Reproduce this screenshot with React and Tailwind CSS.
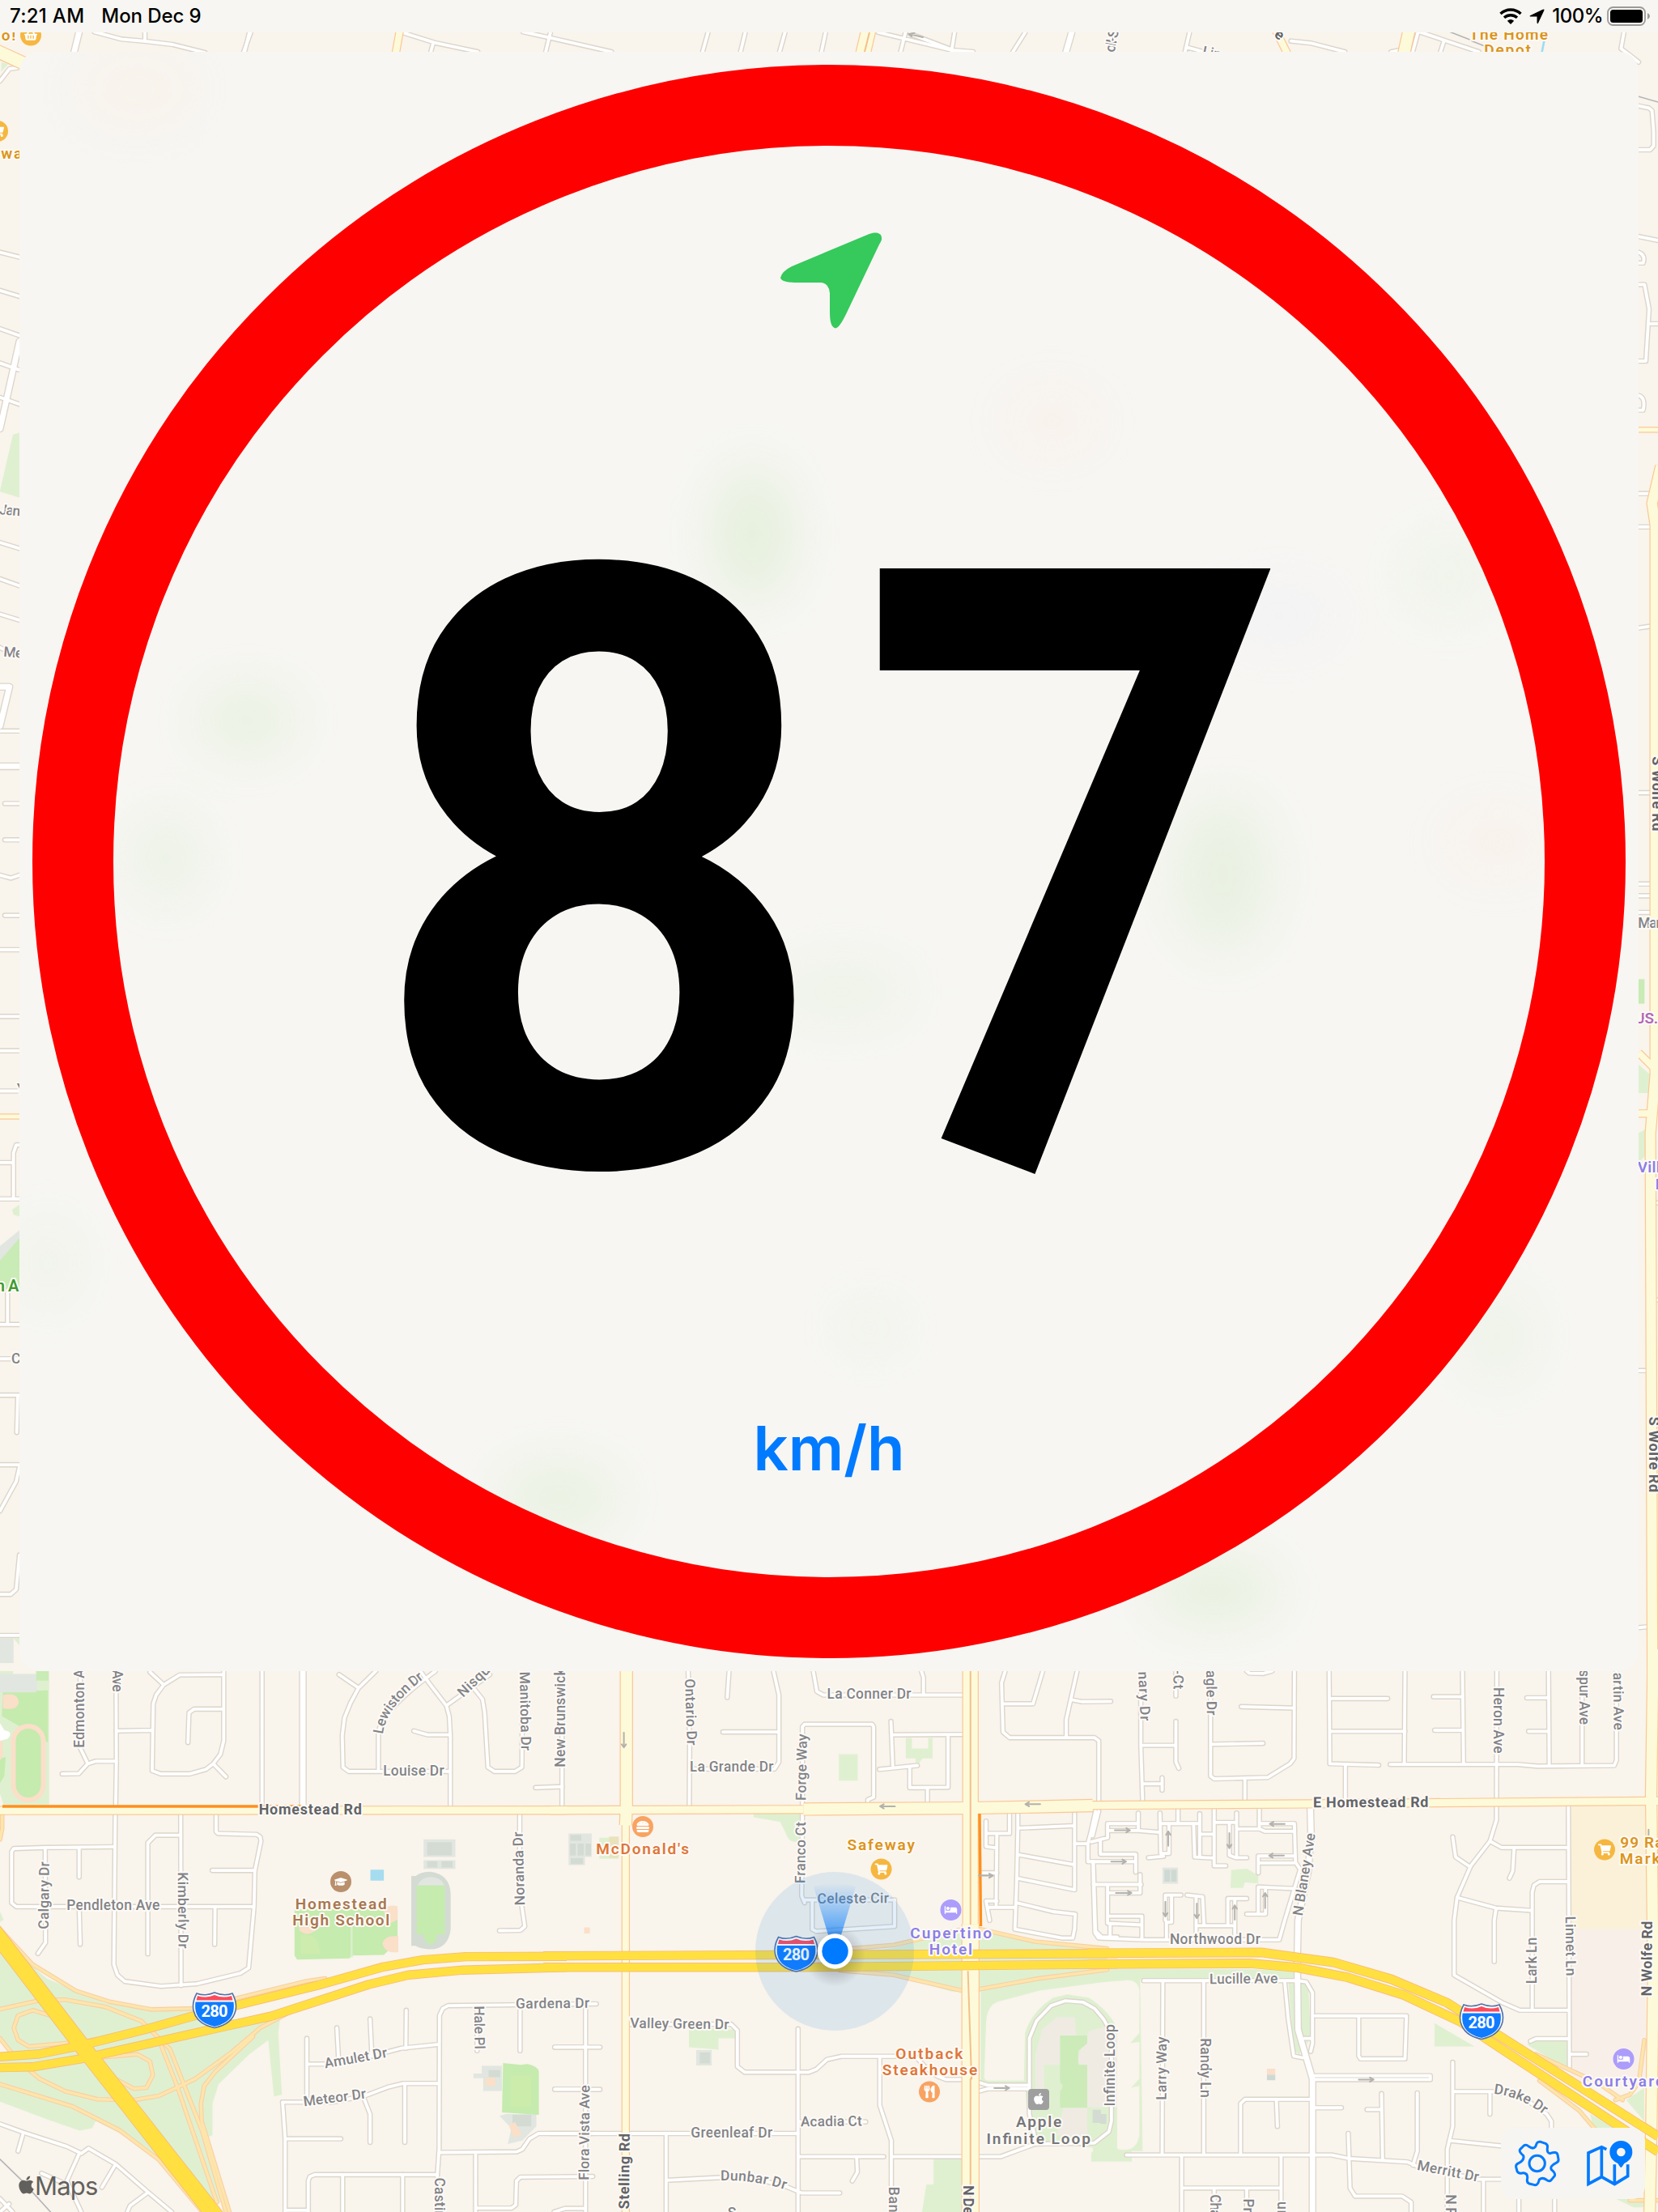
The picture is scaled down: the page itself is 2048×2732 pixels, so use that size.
// FILE: src/App.jsx

import {
  FaApple,
  FaBed,
  FaGraduationCap,
  FaHamburger,
  FaShoppingBasket,
  FaShoppingCart,
  FaUtensils,
} from "react-icons/fa";

// Each map section has its own drawing units
const sections = {
  west: { x: 0, y: 2050, sx: 0.44643, sy: 0.43495 },
  center: { x: 680, y: 2050, sx: 0.44643, sy: 0.43495 },
  east: { x: 1348, y: 2050, sx: 0.44643, sy: 0.43495 },
  left: { x: 0, y: 200, sx: 0.33333, sy: 1.2117 },
  right: { x: 1988, y: 200, sx: 0.33333, sy: 1.2117 },
  topLeft: { x: 0, y: 0, sx: 0.33333, sy: 0.33333 },
  topRight: { x: 1700, y: 0, sx: 0.33333, sy: 0.33333 },
  topA: { x: 300, y: 30, sx: 0.44643, sy: 0.33333 },
  topB: { x: 1000, y: 30, sx: 0.45918, sy: 0.33333 },
};

const place = (s) => {
  const { x, y, sx, sy } = sections[s];
  return `translate(${x} ${y}) scale(${sx} ${sy})`;
};

// [section, fill, path]
const areas = [
  ["west", "#dff0d1", "M0 32H136V412H10L0 380Z"],
  ["west", "#e1e6e0", "M0 40H103V90H0Z"],
  ["west", "#f9f4ec", "M36 32H100V40H36Z"],
  ["west", "#c5ebae", "M8 90L133 87V235L5 160ZM0 280L16 276L12 330L0 350Z"],
  ["west", "#fadfc9", "M8 100Q50 90 52 120Q50 145 8 138ZM0 225L8 235V275L0 285Z"],
  ["west", "#fff", "M0 180L12 200Q40 205 20 225L0 230Z"],
  ["west", "#dff0d1", "M0 780L60 845L130 905L290 975L420 992L530 985L660 1025L775 1018L770 1060L780 1235L758 1240L742 1080L690 1120L605 1205L588 1260V1350L565 1360L610 1540L565 1568L520 1480L400 1380L265 1310L255 1330L220 1337L130 1305L0 1255Z"],
  ["west", "#f9f4ec", "M0 1075L30 1120H0Z"],
  ["west", "#dff0d1", "M0 715L10 738L0 745Z"],
  ["west", "#c5ebae", "M815 708H1100V800L1062 838L970 840L968 848L822 851L815 840Z"],
  ["west", "#cdecae", "M832 780Q885 775 885 835H832Z"],
  ["west", "#d9efcb", "M970 740H976V845H970Z"],
  ["west", "#fadfc9", "M1060 712Q1075 692 1100 700V738L1080 748ZM1058 805Q1065 782 1102 784V830Q1065 835 1058 805ZM828 768Q850 790 878 765V755H828Z"],
  ["west", "#d3dbd3", "M1138 614H1150Q1165 602 1192 602Q1245 610 1247 665V765Q1240 822 1190 822Q1160 820 1150 812H1138Z"],
  ["west", "#e1e6e0", "M1155 641Q1165 617 1192 617Q1220 617 1230 641Z"],
  ["west", "#c5ebae", "M1153 641H1231V780H1210Q1208 808 1190 808Q1174 805 1172 780H1153Z"],
  ["west", "#e1e6e0", "M1172 510H1260V560H1172ZM1172 569H1260V594H1172Z"],
  ["west", "#d3dbd3", "M1182 518H1250V555H1182ZM1182 572H1210V590H1182ZM1222 572H1252V590H1222Z"],
  ["west", "#a5dcf0", "M1025 596H1062V627H1025Z"],
  ["west", "#e1e6e0", "M1333 1153H1389V1224H1337V1188H1310V1175H1333ZM1382 1295L1400 1290H1484V1325L1445 1365L1405 1375L1415 1330Z"],
  ["west", "#d3dbd3", "M1352 1165H1384V1185H1352ZM1418 1292H1470V1325H1418Z"],
  ["west", "#fadfc9", "M1343 1187H1371V1210H1343ZM1408 1322L1425 1312L1444 1348L1422 1358Z"],
  ["west", "#c5ebae", "M1392 1145L1440 1150L1460 1148Q1490 1155 1491 1170V1292L1389 1285Z"],
  ["west", "#cbecaa", "M1412 1180H1470V1270H1412Z"],
  ["center", "#dff0d1", "M562 437H690V515Q660 525 650 490L635 460L562 447Z"],
  ["center", "#dff0d1", "M798 268H850V343H798ZM983 222H1000V252H1045V222H1057V280H1030L1010 305V280H983Z"],
  ["center", "#dff0d1", "M383 1045L512 1050V1075H465V1107L383 1100ZM135 505H188V565H135Z"],
  ["center", "#e9e2bd", "M162 502H189V562H162Z"],
  ["center", "#e1e6e0", "M50 493H114V560H95V583H50ZM403 1108H446V1152H403Z"],
  ["center", "#d3dbd3", "M55 497H85V514H55ZM54 522H70V556H54ZM75 522H92V556H75ZM97 522H112V556H97ZM56 563H90V580H56ZM413 1115H441V1146H413Z"],
  ["center", "#fadfc9", "M93 760H109V777H93Z"],
  ["center", "#dff0d1", "M800 840L950 818L1140 768L1195 765L1340 800L1540 822V880L1200 942H1110L950 895L800 882Z"],
  ["center", "#dff0d1", "M1190 942L1500 880H1568V910L1350 940L1240 970Q1205 980 1205 1040L1200 1185Q1200 1195 1215 1195H1310L1313 1060Q1330 1000 1390 960L1430 950L1490 960Q1550 1000 1568 1050V1400L1505 1425L1500 1385L1325 1370L1313 1205L1190 1200Z"],
  ["center", "#dff0d1", "M1060 1418H1138V1568H1028L1040 1490H1060Z"],
  ["center", "#efebe3", "M1342 1120L1360 1050L1400 1015H1450L1455 1070H1410V1150H1365V1220H1342ZM1470 1100L1490 1055L1540 1040L1568 1060V1270H1480V1160L1455 1140ZM1420 1270H1485V1350H1400Z"],
  ["center", "#ccebb9", "M1410 1067H1485V1090L1460 1110V1150H1485V1272H1410V1225Q1425 1210 1410 1200Z"],
  ["center", "#d3dbd3", "M1500 1278H1523V1315H1500ZM1522 1290H1538V1318H1522Z"],
  ["east", "#dff0d1", "M0 878L440 878L570 885V907H135L142 1395H112V1425H0V1400L40 1360L75 1390Q125 1400 133 1350V1210L110 1215L133 1190V1085L108 1088L133 1060V940Q130 910 100 910L0 918Z"],
  ["east", "#dff0d1", "M545 912H600L607 1075L575 1120L560 1110ZM387 597L430 593L462 612V635L425 632L420 648H385ZM950 1032L1060 1098H950ZM1205 1092L1235 1078H1320V1165ZM1480 1250L1530 1215V1310ZM1390 1330L1380 1290L1450 1330Z"],
  ["east", "#faf1d8", "M1328 415H1535V765H1328Z"],
  ["east", "#f8f0e8", "M1328 765H1535V1200H1328Z"],
  ["east", "#e1e6e0", "M197 590H240V636H197Z"],
  ["east", "#cfd9d3", "M202 596H218V630H202ZM221 596H236V630H221ZM486 1178H509V1194H486Z"],
  ["east", "#fadfc9", "M486 1161H509V1178H486Z"],
  ["east", "#dff0d1", "M1450 1530H1530V1555H1500Z"],
  ["left", "#dff0d1", "M0 335L48 278L72 276V342L0 336Z"],
  ["left", "#c9ebb5", "M0 1118L72 1092V1150H0ZM134 1538H180V1548H134Z"],
  ["left", "#e1e6e0", "M0 1105L72 1089V1097L0 1120ZM0 1505H50V1530H0ZM0 1542H134V1560H0Z"],
  ["left", "#dff0d1", "M45 1068L72 1063V1075L50 1073ZM50 1505H72V1512Z"],
  ["right", "#c9ebb5", "M108 833H130V858H108Z"],
  ["right", "#dff0d1", "M108 920L158 932V949H108ZM108 990L140 985L145 1010L108 1020Z"],
  ["topLeft", "#dff0d1", "M5 230L30 238L5 265Z"],
  ["topRight", "#9bdcf5", "M618 152H626L618 192H610Z"],
];

// [section, path]
const streets = [
  ["west", "M222 32V250L243 295L218 323L172 324M243 295L265 288H322"],
  ["west", "M321 32L322 290L320 415M319 437L315 865L325 895L345 913L445 927L545 920L665 890L688 875L703 700L705 600L722 515L720 503L710 496L603 493L598 488V437"],
  ["west", "M322 202L421 200M415 35L453 71L497 43L619 42M453 71L432 100L424 125L421 315L445 324H525L570 311L590 295L610 268L619 230V32M590 295L625 332M619 140H537L523 150L520 235"],
  ["west", "M725 32V415M938 42L992 80L1040 32M992 80L970 122L953 165L947 215L949 305L965 317H1240M1047 317V205Q1060 140 1205 32M1163 32L1190 70L1235 130L1243 160L1246 215V415M1145 202L1183 213H1246M1235 130L1355 42"],
  ["west", "M1310 80L1335 112L1341 150L1350 305L1368 317H1425L1444 305L1446 32M1555 32V415M1482 363L1556 360"],
  ["west", "M315 531L125 533L38 536L32 545V690L45 701H700M125 533L126 803L105 834M219 533V617M219 701L222 808M409 835V520L430 498H500M500 437L501 925M587 598H705M595 701L594 808"],
  ["west", "M1438 437V660L1452 757L1440 768L1382 769"],
  ["west", "M1650 977L1240 982L1225 990L1216 1010L1215 1390L1210 1462H870L857 1468L853 1480V1568M1320 990V1110M1439 985V1110M849 1075V1250M849 1148H900L1010 1130L1110 1103L1215 1092"],
  ["west", "M932 1045L937 1140M1024 1020L1029 1125M1124 995L1123 1103M1660 1100H1535M1660 1220H1535M782 1256H920L1010 1238L1075 1213L1115 1203H1215M1005 1240L1024 1290V1370M1120 1203V1370"],
  ["west", "M782 1256L789 1360V1568M789 1360H943M1215 1399L1430 1397L1445 1390L1465 1360L1490 1345H1640M1316 1399V1568M1316 1557H1415L1427 1548L1429 1480L1440 1469L1640 1467M948 1462V1568M1114 1462V1568M789 1563H850M1210 1462V1568"],
  ["west", "M0 1318L65 1342L185 1382L225 1402L245 1387L320 1432L410 1512L475 1568M65 1342L50 1395M220 1400L185 1480L225 1568M320 1432L282 1498M115 1458L185 1490M410 1512L360 1550L352 1568M0 1530L35 1568M0 1568L25 1545"],
  ["center", "M381 32L385 240L384 415M494 32L489 107M617 32L632 100V290L620 310H385M477 205H632M727 32L737 90L755 100H1145M1026 32L1032 50V100"],
  ["center", "M697 415V190L703 183H890L894 190V390L878 397V408M942 175L947 300M947 213L1145 212M910 311L1015 300M994 302V363L1100 362V213M1043 363V408"],
  ["center", "M697 437L695 670L703 690M703 682H952V757L735 771L724 765V682M12 1100H97M97 985V1568M12 1219H97M0 1345H685M320 1345V1568M320 1478L470 1470L560 1472L650 1495L695 1514H800M10 1568L40 1558H97"],
  ["center", "M220 1035H500L517 1052V1155L537 1171H715L735 1163L765 1135L805 1126H1010L1040 1160L1070 1182L1095 1192H1145M685 1048V1568M911 1130V1265L943 1365V1568M685 1411H922M943 1411H1245L1340 1375L1505 1372L1545 1340L1552 1310V1060L1530 1020L1505 990L1473 972L1425 968L1385 982L1345 1025L1325 1075V1290L1345 1375M847 1411L849 1455L835 1480M690 1312H872"],
  ["center", "M1185 1200L1210 1208H1325M1185 1225L1210 1218H1325"],
  ["center", "M1258 32L1248 65L1252 205L1270 221H1505L1517 230V400M1362 32L1335 125H1250M1457 32L1440 110L1427 170V221M1440 113L1470 119L1550 118"],
  ["center", "M1205 458V530L1235 534M1270 437V493H1205M1293 437V480L1290 625L1285 765L1415 790H1445L1450 765M1235 493L1233 695M1190 605H1235M1205 685H1235M1210 703H1288M1205 685L1215 740M1293 478L1450 471M1450 437V653L1290 620M1293 553L1450 582M1290 690L1390 715L1452 722L1450 765"],
  ["center", "M1508 430L1495 490L1487 520V573H1502L1508 770L1525 787H1568M1517 430L1500 500M1450 522H1487"],
  ["east", "M137 32V240L142 400M140 243H234M234 175V290L242 308M234 32V103M142 352H195M196 335V370M330 32V330L340 338L488 334L550 295L561 280L562 32M330 240L475 237M415 133L562 137M425 338V400M430 32L437 38L475 39L500 32"],
  ["east", "M658 32L660 295L795 299M660 110H820M660 203H868M868 32L866 295M827 297H1180L1235 302L1447 300L1453 285V32M1027 32L1030 295M947 105H1027M950 200H1027M1122 32L1121 455L1103 515L1050 585L1012 675L1004 740V895L1140 975L1185 995H1320"],
  ["east", "M1265 32L1267 300M1205 108H1265M1210 203H1265M1358 32V300M703 299V395M1000 503L1008 560L1048 588M1103 515L1135 533H1320M1170 533L1166 600L1157 620M1320 410L1323 1155M1320 630H1240L1225 640L1220 660V993M1012 675L1120 705L1220 712M1120 705L1115 740V857M1215 1083L1230 1076H1320M1323 1120H1370"],
  ["east", "M145 911H570L595 915L612 945V1090L607 1112M535 911L545 1020L560 1125L585 1130M590 1075H612M620 1011H872L868 1133H745L740 1125V1011M612 1181H938V1192H612M198 911L196 1405M311 911V1405M97 1406H665L712 1416L875 1426L905 1440L1070 1475H1150"],
  ["east", "M413 1405V1260L425 1248H612M512 1248L515 1325M612 1272H692M763 1277H803M803 1232L806 1420M902 1230V1395L890 1435M711 1345L716 1500L730 1523H860L885 1540V1568M1000 1143V1325L985 1390V1568M1000 1226H1110L1190 1240L1260 1290L1273 1310V1340M1103 1230V1290M990 1365L1150 1382"],
  ["east", "M250 1406V1568M250 1500H525M525 1406V1568M340 1500V1568M430 1500V1568M1085 1475V1568M1183 1520V1568M1282 1520V1568"],
  ["east", "M130 435V480M130 465H45V505L0 517M45 485H130L190 490M190 435L192 550H215V465H300M158 562L200 558M192 465H215M240 420V462M300 437V560M283 465L286 560L340 563M340 420V585H372M340 462H400M402 435V562H430M382 462V555L400 562M300 495H340M402 480H465L480 487H562"],
  ["east", "M465 420V478M470 465H562L565 575L578 595L535 740L520 795H150L20 790L10 775L5 600V573M462 605V557H562M462 577H560M25 515V552H123V603M0 573H123M5 638H138M135 610V662H45M45 640V745M45 728H140V790M45 748L140 753M205 740V668H248M222 670V745H208V790M265 668L308 673L312 755M290 673V790M290 755H397M378 755V678H430M397 680V790M430 722H482V648M462 722V645L565 650M52 750V790"],
  ["left", "M0 92L72 97M0 131L72 137M0 170L72 177M0 205L72 212M0 240L72 247M0 388L72 394M0 425L72 432M0 461L72 467M0 495L20 498M0 580H72M18 654H72M18 691H72M0 727L40 730L72 727M18 768H72M0 803H72M0 871H72M0 906H72M0 947H72M50 1057V1010L60 1002H72M0 1020H50M0 1057H72M0 1185H72M28 1150V1185M0 1220H72M0 1257H72M62 1295L66 1257M0 1328H72M0 1375L60 1345L72 1330M0 1460H40L60 1455L72 1420M0 1502H72"],
  ["right", "M108 76L180 80M108 125H130L147 150L135 203H108M145 165H180M108 92Q135 95 125 103H108M108 238Q135 240 125 253H108M108 338H160M108 372H160M108 475L160 473M108 643H170M108 736H165M108 748H165M108 765H155M160 1061H180M160 1160H180M108 1232H160M108 1494L180 1492"],
  ["topLeft", "M350 118L450 145L540 153L640 165L760 195M537 118V153M930 118L903 192M0 300L35 255L72 250"],
  ["topRight", "M250 155L238 192M160 118L380 192M155 118L135 192M55 192L90 185M918 118L907 180L940 205L972 230M970 392L1010 400L1022 410L1028 490V540L1015 555H970"],
  ["topA", "M18 30L5 102M445 32L530 68L650 102M527 68L520 102M775 28L850 50L1020 102M851 30L838 102M1287 30L1272 102M1390 30L1377 102M1500 30L1485 102"],
  ["topB", "M43 30L32 102M185 30L380 95L440 102M258 30L245 102M390 30L382 100M270 35L385 95M580 30L547 102M1022 30L1010 102M1015 85L1060 102M1295 62L1350 70L1440 102"],
];

const avenues = [
  ["west", "M838 32V414"],
  ["east", "M606 420L608 500L600 600L572 740L570 850L572 1050L612 1190V1568"],
  ["left", "M0 272L72 183M0 575L35 535H0M0 616H72"],
  ["topLeft", "M293 118L275 192"],
  ["topB", "M705 30L690 102"],
];

// [section, width, path]
const arterials = [
  ["west", 9, "M0 428L1568 427"],
  ["center", 9, "M0 427L700 425"],
  ["center", 14, "M700 424L1165 421L1500 414"],
  ["center", 14, "M210 20V415L208 470"],
  ["center", 8, "M208 400V1568"],
  ["center", 18, "M1162 20V750"],
  ["center", 20, "M1162 750V1568"],
  ["east", 9, "M0 413L600 409L1568 401"],
  ["east", 13, "M1555 -30L1549 380L1555 900L1550 1300L1545 1568"],
  ["left", 5, "M0 973H72"],
  ["right", 5, "M108 273H180"],
  ["right", 12, "M190 310L158 348L170 370V930L152 990L160 1568"],
  ["right", 8, "M108 908L170 925M108 970H165"],
  ["topLeft", 15, "M-10 190L110 245"],
  ["topRight", 14, "M122 110L102 200"],
  ["topA", 8, "M434 25L423 108"],
  ["topB", 17, "M158 25L144 108"],
  ["topB", 8, "M1255 25L1285 108"],
];

const ramps = [
  ["west", "M0 765L90 865L210 940L300 970L420 993L540 990M540 990L850 912L900 905M0 992L110 967L180 965L290 985L390 1025L470 1105L560 1340L625 1568"],
  ["west", "M380 1058L220 1085L80 1098L50 1080L38 1045L50 1010L90 995L140 1010M270 1130L380 1120L415 1140L423 1180L405 1215L370 1218L320 1190L265 1135"],
  ["west", "M0 1075L35 1120M75 1160L110 1190L180 1225L270 1248L370 1250L440 1238L540 1190L640 1115L720 1045L830 985M0 1205L200 1268L330 1335L440 1420L560 1568"],
  ["west", "M700 1070L595 1170L565 1210L556 1260L558 1310L635 1568M440 1080L490 1210L600 1540"],
  ["west", "M6 440V480L0 510"],
  ["center", "M830 820L950 810L1140 765M800 882L950 895L1150 942L1350 905L1540 880M1190 765L1340 800L1540 820"],
  ["east", "M1230 1120L1400 1200L1470 1250M1240 1195L1350 1280L1400 1340M1530 1080L1515 1200L1490 1235L1450 1250M1490 1535H1568"],
];

const freeways = [
  ["west", 9.6, "M-10 1128L110 1119L230 1094L400 1050L540 1010L880 924L1060 872L1170 852L1290 843L1568 842"],
  ["west", 9.6, "M-10 1158L90 1156L230 1132L600 1046L750 1012L1020 922L1130 895L1280 881L1568 873"],
  ["west", 9.8, "M-10 763L246 1105L610 1580"],
  ["west", 9.8, "M-10 797L220 1105L582 1580"],
  ["center", 9.6, "M-20 841L1568 834"],
  ["center", 9.6, "M-20 873H700L1568 864"],
  ["east", 10, "M-10 833L470 831L670 859L830 907L985 974L1568 1353"],
  ["east", 10, "M-10 864L440 862L570 874L710 902L865 952L1020 1027L1568 1397"],
];

const dividers = [
  ["center", "M1162 20V750M1155 885L1165 1190M1162 1190V1568"],
  ["topB", "M162 25L147 108"],
];

const arrows = [
  ["center", "M203 207V248M197 240L203 249L209 240"],
  ["center", "M953 416H913M922 410L912 416L922 422M1355 410H1315M1324 404L1314 410L1324 416"],
  ["center", "M1185 613H1223M1214 607L1224 613L1214 619M1228 1216H1268M1259 1210L1269 1216L1259 1222"],
  ["east", "M65 484H106M97 478L107 484L97 490M55 573H95M86 567L96 573L86 579M68 662H110M101 656L111 662L101 668M740 1192H780M771 1186L781 1192L771 1198"],
  ["east", "M213 528V488M207 497L213 487L219 497M382 492V534M376 525L382 535L388 525M535 466H495M504 460L494 466L504 472M533 556H493M502 550L492 556L502 562"],
  ["east", "M205 687V728M199 719L205 729L211 719M292 692V733M286 724L292 734L298 724M397 738V698M391 707L397 697L403 707M481 705V663M475 672L481 662L487 672M1542 482V520"],
  ["topB", "M305 48L268 36M275 46L267 36L282 32"],
];

const rails = [
  ["west", "M0 1418L60 1478L140 1568"],
  ["topRight", "M272 118L345 146M355 152L400 170M970 357L1044 378"],
];

// [section, text, x1, y1, x2, y2, kind]; the text runs from point 1 to point 2
const roadLabels = [
  ["west", "Edmonton A", 234, 250, 234, 26],
  ["west", "Ave", 312, 28, 312, 91],
  ["west", "Nisqu", 1281, 108, 1358, 32],
  ["west", "Manitoba Dr", 1438, 34, 1442, 258],
  ["west", "New Brunswick", 1564, 305, 1564, 24],
  ["west", "Louise Dr", 1060, 329, 1229, 329],
  ["west", "Homestead Rd", 716, 440, 1001, 440, "major"],
  ["west", "Calgary Dr", 134, 765, 136, 573],
  ["west", "Pendleton Ave", 184, 711, 442, 711],
  ["west", "Kimberly Dr", 492, 603, 494, 820],
  ["west", "Noranda Dr", 1452, 697, 1446, 488],
  ["west", "Gardena Dr", 1427, 990, 1631, 988],
  ["west", "Hale Pl", 1312, 983, 1314, 1106],
  ["west", "Amulet Dr", 900, 1160, 1073, 1128],
  ["west", "Meteor Dr", 841, 1268, 1014, 1245],
  ["west", "Castine Ave", 1202, 1470, 1202, 1688],
  ["center", "Ontario Dr", 372, 54, 378, 243],
  ["center", "La Conner Dr", 765, 111, 998, 111],
  ["center", "La Grande Dr", 385, 318, 617, 318],
  ["center", "Forge Way", 706, 400, 710, 211],
  ["center", "Franco Ct", 704, 635, 706, 460],
  ["center", "Celeste Cir", 738, 692, 936, 690],
  ["center", "Valley Green Dr", 220, 1045, 494, 1049],
  ["center", "Flora Vista Ave", 106, 1478, 108, 1208],
  ["center", "Stelling Rd", 217, 1560, 219, 1345, "major"],
  ["center", "Greenleaf Dr", 388, 1357, 614, 1357],
  ["center", "Acadia Ct", 692, 1325, 862, 1323],
  ["center", "Bandley", 936, 1496, 936, 1650],
  ["center", "N De Anza", 1143, 1492, 1143, 1670, "major"],
  ["center", "Infinite Loop", 1561, 1268, 1561, 1035],
  ["center", "S", 490, 1584, 506, 1584],
  ["east", "nary Dr", 130, 34, 136, 174],
  ["east", "-Ct", 226, 28, 228, 84],
  ["east", "agle Dr", 318, 30, 320, 158],
  ["east", "Heron Ave", 1114, 78, 1114, 266],
  ["east", "spur Ave", 1350, 28, 1350, 184],
  ["east", "artin Ave", 1444, 36, 1446, 200],
  ["east", "E Homestead Rd", 614, 419, 933, 418, "major"],
  ["east", "N Blaney Ave", 584, 728, 620, 494],
  ["east", "Northwood Dr", 217, 806, 468, 806],
  ["east", "Lucille Ave", 327, 920, 516, 918],
  ["east", "Larry Way", 207, 1250, 208, 1070],
  ["east", "Randy Ln", 302, 1074, 302, 1243],
  ["east", "Linnet Ln", 1312, 728, 1314, 898],
  ["east", "Lark Ln", 1231, 920, 1231, 788],
  ["east", "N Wolfe Rd", 1550, 955, 1552, 742, "major"],
  ["east", "Merritt Dr", 900, 1448, 1070, 1482],
  ["east", "Chav", 330, 1518, 330, 1600],
  ["east", "Pric", 422, 1530, 422, 1600],
  ["east", "urc", 516, 1538, 516, 1600],
  ["east", "N Portal", 980, 1518, 980, 1660],
  ["left", "Jan", -4, 359, 74, 361],
  ["left", "Mer", 12, 504, 100, 506],
  ["left", "Y", 62, 950, 84, 950],
  ["left", "C", 42, 1225, 72, 1225],
  ["left", "n A", -16, 1151, 70, 1151, "park"],
  ["right", "S Wolfe Rd", 158, 606, 158, 682, "major"],
  ["right", "Mariani", 106, 781, 260, 781],
  ["right", "US. P", 94, 878, 230, 878, "shop"],
  ["right", "Villa", 104, 1030, 220, 1030, "hotel"],
  ["right", "H", 170, 1047, 200, 1047, "hotel"],
  ["right", "S Wolfe Rd", 146, 1279, 146, 1356, "major"],
  ["topB", "oll-S", 820, 106, 832, 22],
  ["topB", "Lin", 1055, 116, 1105, 130],
  ["topB", "e", 1248, 42, 1268, 66, "major"],
  ["center", "McDonald's", 126, 551, 383, 551, "food"],
  ["center", "Safeway", 821, 540, 1008, 540, "store"],
  ["center", "Cupertino", 995, 790, 1221, 790, "hotel"],
  ["center", "Hotel", 1048, 836, 1167, 836, "hotel"],
  ["center", "Outback", 955, 1134, 1141, 1134, "food"],
  ["center", "Steakhouse", 918, 1180, 1181, 1180, "food"],
  ["center", "Apple", 1288, 1327, 1414, 1327, "work"],
  ["center", "Infinite Loop", 1206, 1374, 1494, 1374, "work"],
  ["west", "Homestead", 817, 709, 1070, 709, "school"],
  ["west", "High School", 809, 755, 1078, 755, "school"],
  ["east", "99 Ranch", 1463, 533, 1660, 533, "store"],
  ["east", "Market", 1462, 579, 1620, 579, "store"],
  ["east", "Courtyard", 1359, 1212, 1585, 1212, "hotel"],
  ["topLeft", "o!", 5, 151, 58, 151, "store"],
  ["topLeft", "wa", 4, 589, 82, 589, "store"],
  ["topRight", "The Home", 345, 147, 636, 147, "store"],
  ["topRight", "Depot", 400, 204, 573, 204, "store"],
];

const labelStyles = {
  minor: "fill-[#828387] font-[Roboto,sans-serif] text-[17.5px] font-medium",
  major: "fill-[#636467] font-[Roboto,sans-serif] text-[18px] font-bold",
  food: "fill-[#df7638] font-[Roboto,sans-serif] text-[19px] font-semibold",
  store: "fill-[#dc9419] font-[Roboto,sans-serif] text-[19px] font-semibold",
  hotel: "fill-[#8b7ee6] font-[Roboto,sans-serif] text-[19px] font-semibold",
  work: "fill-[#76777a] font-[Roboto,sans-serif] text-[19px] font-semibold",
  school: "fill-[#a8774f] font-[Roboto,sans-serif] text-[19px] font-semibold",
  park: "fill-[#3c9a2e] font-[Roboto,sans-serif] text-[20px] font-semibold",
  shop: "fill-[#b267b5] font-[Roboto,sans-serif] text-[19px] font-semibold",
};

// [icon, x, y, color]
const pins = [
  [FaGraduationCap, 421, 2324, "#b98f6c"],
  [FaHamburger, 794, 2256, "#f8a362"],
  [FaShoppingCart, 1088.5, 2308.5, "#f6b740"],
  [FaBed, 1174.5, 2359, "#ac9cfb"],
  [FaUtensils, 1148, 2583.5, "#f8a362"],
  [FaShoppingCart, 1982, 2284.5, "#f6b740"],
  [FaBed, 2005.5, 2543, "#ac9cfb"],
  [FaShoppingBasket, 38, 43.5, "#f6b740"],
  [FaShoppingCart, -3, 162, "#f6b740"],
];

const smudges = [
  [930, 660, 70, 120, "#cfe8c0"],
  [1510, 1080, 90, 140, "#d8ebce"],
  [305, 890, 90, 60, "#d6ebc8"],
  [205, 1060, 60, 80, "#daecd0"],
  [1790, 710, 90, 80, "#e6f2e0"],
  [690, 1850, 110, 60, "#d6ebc8"],
  [1500, 1965, 120, 55, "#d2eac4"],
  [1040, 1225, 130, 60, "#e2efda"],
  [1075, 1640, 70, 50, "#e6f0e0"],
  [1850, 1650, 70, 90, "#e2efda"],
  [60, 1560, 50, 80, "#e2efda"],
  [1300, 520, 80, 50, "#fbe9dc"],
  [1850, 1040, 90, 50, "#fbe9dc"],
  [170, 110, 110, 60, "#fbeee0"],
  [1580, 760, 110, 60, "#efeff6"],
];

function Roads({ list, color, width }) {
  return list.map((item, i) => (
    <path
      key={i}
      transform={place(item[0])}
      d={item[item.length - 1]}
      fill="none"
      stroke={color}
      strokeWidth={item.length === 3 ? item[1] + width : width}
      strokeLinecap={item.length === 3 ? "butt" : "round"}
      strokeLinejoin="round"
      vectorEffect="non-scaling-stroke"
    />
  ));
}

function Label({ item }) {
  const [s, text, x1, y1, x2, y2, kind = "minor"] = item;
  const { x, y, sx, sy } = sections[s];
  const dx = (x2 - x1) * sx;
  const dy = (y2 - y1) * sy;
  const angle = (Math.atan2(dy, dx) * 180) / Math.PI;

  return (
    <text
      transform={`translate(${x + x1 * sx} ${y + y1 * sy}) rotate(${angle})`}
      textLength={Math.hypot(dx, dy)}
      className={labelStyles[kind]}
      stroke="#fdfaf6"
      strokeWidth="4"
      strokeLinejoin="round"
      paintOrder="stroke"
    >
      {text}
    </text>
  );
}

function Shield({ x, y }) {
  return (
    <g transform={`translate(${x} ${y})`}>
      <path
        d="M-22 -21Q-12 -17 0 -22Q12 -17 22 -21Q28 -10 26 0Q22 17 0 21.5Q-22 17 -26 0Q-28 -10 -22 -21Z"
        fill="#fff"
        stroke="#5571a6"
        strokeWidth="1.6"
      />
      <path d="M-23.5 -10.5H23.5Q26 8 12 15.5Q6 19 0 20Q-6 19 -12 15.5Q-26 8 -23.5 -10.5Z" fill="#0f7bff" />
      <path d="M-22.5 -12.5L-21 -18Q-10 -14.5 0 -19Q10 -14.5 21 -18L22.5 -12.5Z" fill="#fb4c5c" />
      <text
        y="7.5"
        textAnchor="middle"
        textLength="33"
        className="fill-white font-[Roboto,sans-serif] text-[20px] font-bold"
      >
        280
      </text>
    </g>
  );
}

function MapCanvas() {
  return (
    <svg className="absolute inset-0" width="2048" height="2732" viewBox="0 0 2048 2732">
      <defs>
        <linearGradient id="beam" x1="0" y1="1" x2="0" y2="0">
          <stop offset="0" stopColor="#007aff" stopOpacity="0.65" />
          <stop offset="1" stopColor="#007aff" stopOpacity="0" />
        </linearGradient>
        <radialGradient id="shade">
          <stop offset="0.4" stopColor="#000" stopOpacity="0.2" />
          <stop offset="1" stopColor="#000" stopOpacity="0" />
        </radialGradient>
      </defs>

      <rect width="2048" height="2732" fill="#f9f4ec" />

      {areas.map(([s, fill, d], i) => (
        <path key={i} transform={place(s)} d={d} fill={fill} />
      ))}
      <rect x="16.5" y="2132" width="37" height="91" rx="18.5" fill="#c5ebae" stroke="#fadfc9" strokeWidth="6" />

      {/* Local streets */}
      <Roads list={streets} color="#dcd5ca" width={6.6} />
      <Roads list={avenues} color="#dcd5ca" width={9.5} />
      <Roads list={streets} color="#ffffff" width={3.8} />
      <Roads list={avenues} color="#ffffff" width={6.8} />

      {/* Main roads */}
      <Roads list={ramps} color="#f9cfa2" width={5.6} />
      <Roads list={ramps} color="#fde5ac" width={3.4} />
      <Roads list={arterials} color="#fbc795" width={2.4} />
      <Roads list={arterials} color="#fdfad9" width={0} />
      <Roads list={dividers} color="#f4bf8d" width={2} />
      <path d="M3 2231H372" stroke="#ff8f1c" strokeWidth="3.4" />
      <path d="M1210 2240L1211.500 2379" stroke="#ff8f1c" strokeWidth="3.4" />

      {/* Freeways */}
      <Roads list={freeways} color="#f8bd78" width={1.8} />
      <Roads list={freeways} color="#ffe040" width={0} />

      <Roads list={rails} color="#b4b4b6" width={1.6} />
      <Roads list={arrows} color="#b3b2ac" width={2} />

      {roadLabels.map((item, i) => (
        <Label key={i} item={item} />
      ))}

      <g
        className="fill-[#828387] font-[Roboto,sans-serif] text-[17.5px] font-medium"
        stroke="#fdfaf6"
        strokeWidth="4"
        paintOrder="stroke"
      >
        <path id="lewiston" d="M473 2142Q476 2108 528 2070" fill="none" stroke="none" />
        <text textLength="88">
          <textPath href="#lewiston">Lewiston Dr</textPath>
        </text>
        <path id="drake" d="M1845 2586Q1880 2589 1912 2616" fill="none" stroke="none" />
        <text textLength="68">
          <textPath href="#drake">Drake Dr</textPath>
        </text>
        <path id="dunbar" d="M890 2693Q935 2692 975 2706" fill="none" stroke="none" />
        <text textLength="81">
          <textPath href="#dunbar">Dunbar Dr</textPath>
        </text>
      </g>

      {pins.map(([Icon, x, y, color], i) => (
        <g key={i}>
          <circle cx={x} cy={y} r="13" fill={color} />
          <Icon x={x - 8} y={y - 8} size={16} color="#fff" />
        </g>
      ))}
      <rect x="1270" y="2580" width="26" height="26" rx="4" fill="#a09fa0" />
      <FaApple x={1275} y={2584} size={16} color="#fff" />

      <Shield x={265} y={2483} />
      <Shield x={983.500} y={2413.500} />
      <Shield x={1830} y={2497} />

      {/* Current location */}
      <circle cx="1031" cy="2410" r="98" fill="#1a80e6" opacity="0.12" />
      <path d="M1023 2390L1005 2330Q1031 2322 1057 2330L1039 2390Z" fill="url(#beam)" />
      <circle cx="1031" cy="2416" r="38" fill="url(#shade)" />
      <circle cx="1031.500" cy="2410" r="21.700" fill="#fff" />
      <circle cx="1031.500" cy="2410" r="16.200" fill="#007aff" />
    </svg>
  );
}

function StatusBar() {
  return (
    <header className="flex h-10 items-center justify-between bg-[#f7f6f2] pl-3 pr-[10px] font-[Inter,sans-serif] text-[24px] font-medium text-black">
      <div className="flex gap-[21px]">
        <span className="tracking-[0.3px]">7:21 AM</span>
        <span className="tracking-[-0.1px]">Mon Dec 9</span>
      </div>
      <div className="flex items-center">
        <svg width="28" height="20" viewBox="0 0 28 20">
          <path d="M1.500 7A18 18 0 0 1 26.500 7" fill="none" stroke="#000" strokeWidth="3.400" />
          <path d="M6 11.800A12 12 0 0 1 22 11.800" fill="none" stroke="#000" strokeWidth="3.400" />
          <path d="M9.800 15.700Q14 12.200 18.200 15.700L14 20Z" fill="#000" />
        </svg>
        <svg className="ml-[9px]" width="19" height="19" viewBox="0 0 19 19">
          <path d="M18 0.500Q18.800 0.800 18.300 2L11 17.500Q10 19 9.500 17V9.500H1.500Q-0.500 9 1.500 8L16.500 0.800Z" fill="#000" />
        </svg>
        <span className="ml-[9px] tracking-[-0.5px]">100%</span>
        <svg className="ml-[5px]" width="53" height="24" viewBox="0 0 53 24">
          <rect x="1" y="1" width="46" height="22" rx="6.500" fill="none" stroke="#9b9a98" strokeWidth="1.800" />
          <rect x="4" y="4" width="40" height="16" rx="3.500" fill="#000" />
          <path d="M50 8Q53 9.500 53 12Q53 14.500 50 16Z" fill="#9b9a98" />
        </svg>
      </div>
    </header>
  );
}

function Speedometer() {
  return (
    <main className="relative mx-6 mt-6 h-[2000px] overflow-hidden rounded-[24px] bg-[#f7f6f3] p-4">
      <svg className="absolute inset-0" width="2000" height="2000" viewBox="0 0 2000 2000">
        <defs>
          <filter id="soft" x="-100%" y="-100%" width="300%" height="300%">
            <feGaussianBlur stdDeviation="34" />
          </filter>
        </defs>
        {smudges.map(([x, y, rx, ry, color], i) => (
          <ellipse
            key={i}
            cx={x - 24}
            cy={y - 64}
            rx={rx * 0.7}
            ry={ry * 0.7}
            fill={color}
            opacity="0.45"
            filter="url(#soft)"
          />
        ))}
      </svg>

      <div className="relative flex h-[1968px] w-[1968px] flex-col items-center rounded-full border-[100px] border-[#ff0000] pt-[106px]">
        <svg className="ml-[5px]" width="126" height="120" viewBox="0 0 126 120">
          <path
            d="M109 3.300C118 0 126 1 125 10Q124 13 122 16L82 100Q73 119 68 119.500C62 118 61 109 61 98V76Q60 64 50 63H18Q1 62.500 0 57Q2 49 14 43Z"
            fill="#36c95c"
          />
        </svg>
        <div className="mt-[98px] ml-[25px] flex h-[1160px] items-center font-[Roboto,sans-serif] text-[1035px] leading-[1160px] font-bold text-black">
          <span className="scale-x-[0.965]">8</span>
          <span className="scale-x-[0.927] [-webkit-text-stroke:26px_black] [clip-path:polygon(30px_198px,551px_198px,237px_946px,30px_873px)]">
            7
          </span>
        </div>
        <div className="mt-[78px] font-[Inter,sans-serif] text-[76px] leading-[92px] font-semibold text-[#007aff]">
          km/h
        </div>
      </div>
    </main>
  );
}

function Toolbar() {
  return (
    <footer className="flex flex-1 items-end justify-between pb-4 pl-5 pr-[16px]">
      <div className="-mb-0.5 flex items-center text-[#62605d]">
        <FaApple size={25} className="-mt-1" />
        <span className="-ml-0.5 font-[Inter,sans-serif] text-[31px] leading-9 tracking-[-0.8px]">Maps</span>
      </div>

      <div className="flex h-[88px] w-[178px] items-center justify-between rounded-2xl bg-[#f6f5f1] pl-[17px] pr-[15px]">
        <button>
          <svg width="56" height="58" viewBox="64 69 168 174" fill="none" stroke="#007aff" strokeLinejoin="round">
            <path
              d="M146 81Q150 74 160 76L178 82Q188 87 185 99Q183 118 195 119Q220 110 223 124L226 140Q228 150 216 155Q193 166 200 179Q216 192 212 202L199 218Q192 225 182 217Q167 206 155 216Q150 238 138 236L118 231Q107 227 111 211Q113 193 97 191Q78 196 73 185L69 169Q67 159 80 154Q101 144 96 127Q78 112 84 104L98 90Q106 84 116 93Q132 105 141 94Z"
              strokeWidth="9"
            />
            <circle cx="147" cy="156" r="29" strokeWidth="9" />
          </svg>
        </button>
        <button>
          <svg width="57" height="58" viewBox="329 64 171 174" fill="none" stroke="#007aff" strokeWidth="11">
            <path d="M402 99L384 90L335 112V227L384 201L432 228L481 198V155M384 90V201M432 228V155" />
            <path
              d="M456 67A42 42 0 0 1 498 109C498 132 482 144 468 151L460 163Q456 169 452 163L444 151C430 144 414 132 414 109A42 42 0 0 1 456 67ZM456 93A16 16 0 1 0 456 125A16 16 0 1 0 456 93Z"
              fill="#007aff"
              fillRule="evenodd"
              stroke="none"
            />
          </svg>
        </button>
      </div>
    </footer>
  );
}

export default function App() {
  return (
    <div className="relative h-[2732px] w-[2048px] overflow-hidden bg-[#f9f4ec]">
      <MapCanvas />
      <div className="relative flex h-full flex-col">
        <StatusBar />
        <Speedometer />
        <Toolbar />
      </div>
    </div>
  );
}
